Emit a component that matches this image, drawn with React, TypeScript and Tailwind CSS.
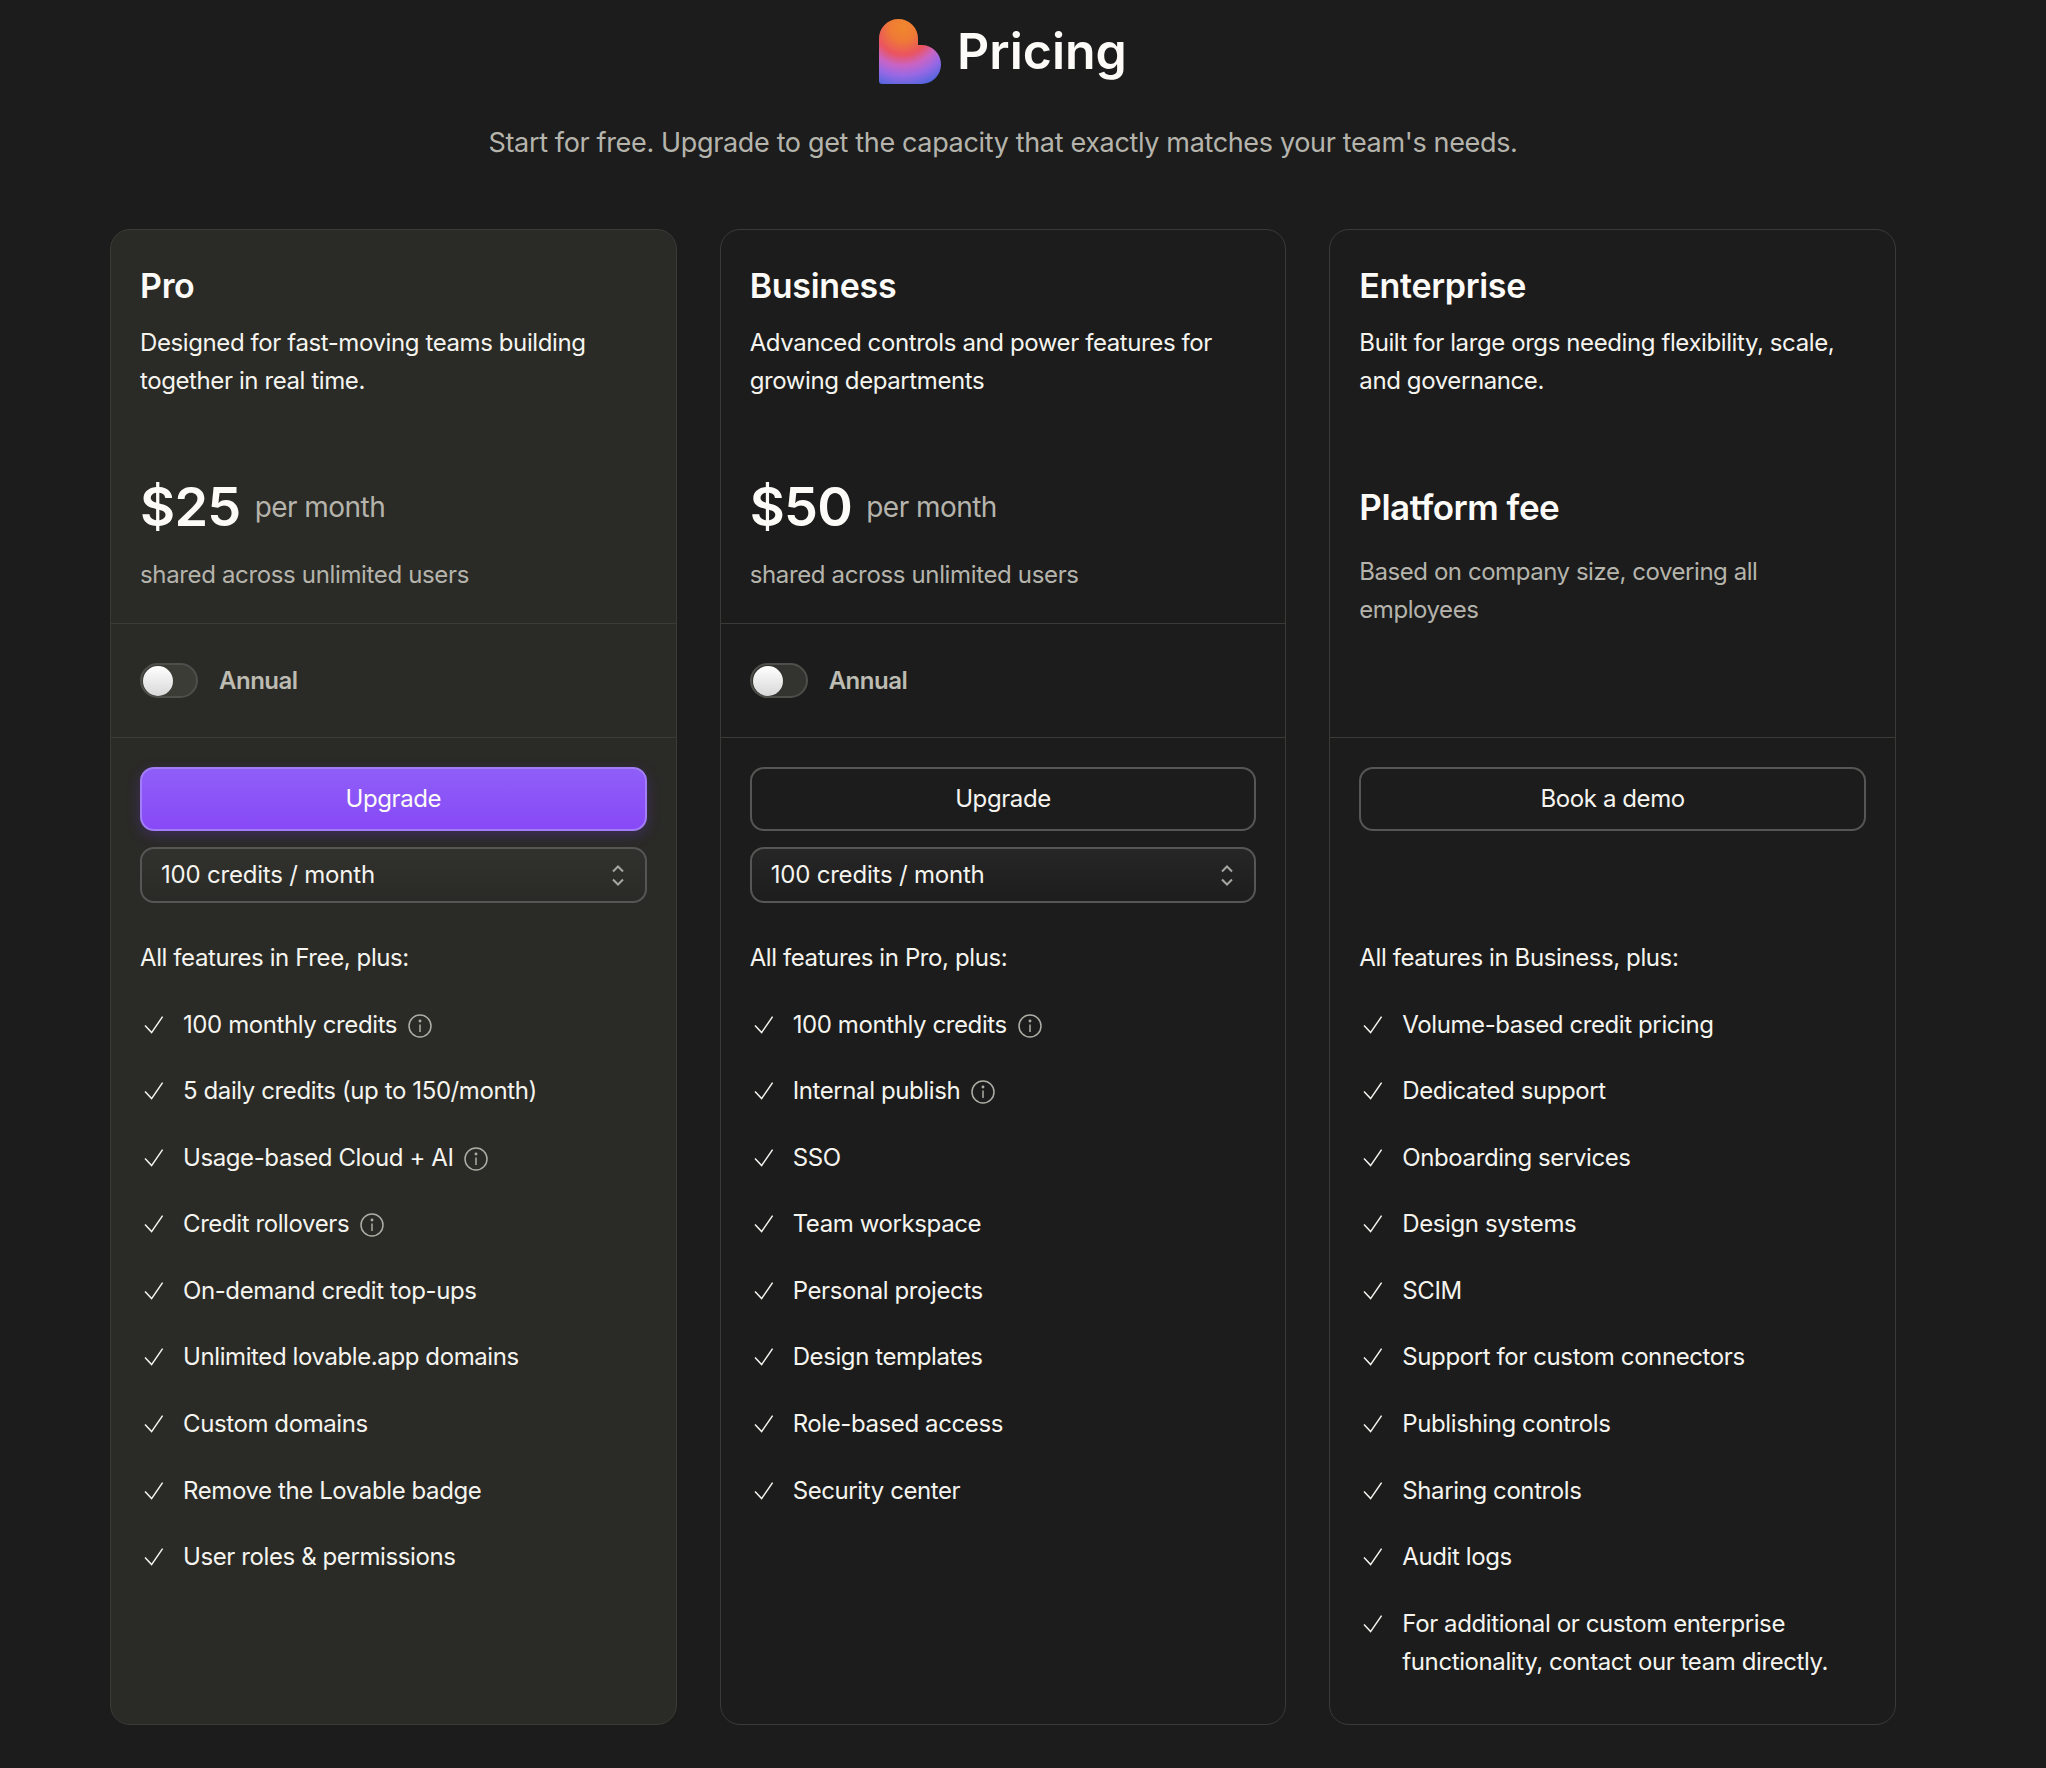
const FONT = "font-['Inter','Liberation_Sans',sans-serif]"

type Feature = { text: string; info?: boolean }

type Plan = {
  name: string
  description: string
  price?: string
  priceNote: string
  cta: string
  highlighted?: boolean
  featuresTitle: string
  features: Feature[]
}

const plans: Plan[] = [
  {
    name: 'Pro',
    description: 'Designed for fast-moving teams building together in real time.',
    price: '$25',
    priceNote: 'shared across unlimited users',
    cta: 'Upgrade',
    highlighted: true,
    featuresTitle: 'All features in Free, plus:',
    features: [
      { text: '100 monthly credits', info: true },
      { text: '5 daily credits (up to 150/month)' },
      { text: 'Usage-based Cloud + AI', info: true },
      { text: 'Credit rollovers', info: true },
      { text: 'On-demand credit top-ups' },
      { text: 'Unlimited lovable.app domains' },
      { text: 'Custom domains' },
      { text: 'Remove the Lovable badge' },
      { text: 'User roles & permissions' },
    ],
  },
  {
    name: 'Business',
    description: 'Advanced controls and power features for growing departments',
    price: '$50',
    priceNote: 'shared across unlimited users',
    cta: 'Upgrade',
    featuresTitle: 'All features in Pro, plus:',
    features: [
      { text: '100 monthly credits', info: true },
      { text: 'Internal publish', info: true },
      { text: 'SSO' },
      { text: 'Team workspace' },
      { text: 'Personal projects' },
      { text: 'Design templates' },
      { text: 'Role-based access' },
      { text: 'Security center' },
    ],
  },
  {
    name: 'Enterprise',
    description: 'Built for large orgs needing flexibility, scale, and governance.',
    priceNote: 'Based on company size, covering all employees',
    cta: 'Book a demo',
    featuresTitle: 'All features in Business, plus:',
    features: [
      { text: 'Volume-based credit pricing' },
      { text: 'Dedicated support' },
      { text: 'Onboarding services' },
      { text: 'Design systems' },
      { text: 'SCIM' },
      { text: 'Support for custom connectors' },
      { text: 'Publishing controls' },
      { text: 'Sharing controls' },
      { text: 'Audit logs' },
      { text: 'For additional or custom enterprise functionality, contact our team directly.' },
    ],
  },
]

function HeartLogo() {
  return (
    <svg width="62" height="65" viewBox="0 0 62 65" className="shrink-0">
      <defs>
        <radialGradient id="heart" gradientUnits="userSpaceOnUse" cx="24" cy="8" r="62">
          <stop offset="0" stopColor="#f0882f" />
          <stop offset="0.22" stopColor="#ef7a35" />
          <stop offset="0.45" stopColor="#ea5460" />
          <stop offset="0.62" stopColor="#c964c4" />
          <stop offset="0.78" stopColor="#9a68e4" />
          <stop offset="1" stopColor="#4d66de" />
        </radialGradient>
      </defs>
      <path
        d="M0 19.5A19.5 19.5 0 0 1 39 19.5V26H42.5A19.5 19.5 0 0 1 42.5 65H3Q0 65 0 62Z"
        fill="url(#heart)"
      />
    </svg>
  )
}

function CheckMark() {
  return (
    <svg width="20" height="18" viewBox="0 0 20 18" fill="none" stroke="#f5f4ef" strokeWidth="1.5" className="ml-[4px] mt-[10px] shrink-0">
      <path d="M1 9.5L7.6 16.6L18.6 0.6" />
    </svg>
  )
}

function InfoIcon() {
  return (
    <svg width="24" height="24" viewBox="0 0 24 24" fill="none" stroke="#aeada5" strokeWidth="1.5" className="shrink-0">
      <circle cx="12" cy="12" r="11" />
      <path d="M12 10.5v7.5" />
      <circle cx="12" cy="7" r="0.7" fill="#aeada5" />
    </svg>
  )
}

function UpDown() {
  return (
    <svg width="12" height="21" viewBox="0 0 12 21" fill="none" stroke="#a6a5a0" strokeWidth="2.1">
      <path d="M1 6.5L6 1.5L11 6.5" />
      <path d="M1 14.5L6 19.5L11 14.5" />
    </svg>
  )
}

function PlanCard({ plan }: { plan: Plan }) {
  return (
    <div
      className={`flex h-[1496px] flex-col rounded-[20px] border border-[#3a3a37] ${
        plan.highlighted ? 'bg-[#2a2a26]' : 'bg-[#1c1c1c]'
      }`}
    >
      {/* Intro */}
      <div className={`flex flex-col border-b border-[#3a3a37] px-[29px] pt-[33px] ${plan.price ? 'h-[394px]' : 'h-[508px]'}`}>
        <h2 className="text-[34px] leading-[46px] font-semibold tracking-[-0.3px] text-[#fcfbf8]">{plan.name}</h2>
        <p className="mt-[15px] text-[24px] leading-[38px] tracking-[-0.4px] text-[#f5f4ef]">{plan.description}</p>
        {plan.price ? (
          <>
            <div className="mt-[69px] flex items-center gap-[14px]">
              <span className="text-[54px] leading-[76px] font-semibold tracking-[-0.7px] text-[#fcfbf8]">{plan.price}</span>
              <span className="text-[28px] tracking-[-0.55px] text-[#b5b4ac]">per month</span>
            </div>
            <p className="mt-[11px] text-[24px] leading-[38px] tracking-[-0.35px] text-[#b5b4ac]">{plan.priceNote}</p>
          </>
        ) : (
          <>
            <h3 className="mt-[84px] text-[35px] leading-[46px] font-semibold tracking-[-0.5px] text-[#fcfbf8]">Platform fee</h3>
            <p className="mt-[23px] text-[24px] leading-[38px] tracking-[-0.45px] text-[#b5b4ac]">{plan.priceNote}</p>
          </>
        )}
      </div>

      {/* Annual toggle */}
      {plan.price && (
        <div className="flex h-[114px] items-center gap-[21px] border-b border-[#3a3a37] px-[29px]">
          <div
            className={`flex h-[35px] w-[58px] items-center rounded-full border-2 border-[#4e4e4b] pl-[1px] ${
              plan.highlighted ? 'bg-[#3c3c37]' : 'bg-[#33332f]'
            }`}
          >
            <div className="size-[30px] rounded-full bg-gradient-to-b from-white to-[#d8d8d8]" />
          </div>
          <span className="text-[24px] font-semibold tracking-[-0.5px] text-[#bdbcb3]">Annual</span>
        </div>
      )}

      {/* Actions and features */}
      <div className="flex flex-col px-[29px] pt-[29px]">
        <button
          className={`h-[64px] rounded-[14px] border-2 text-[24px] tracking-[-0.4px] ${
            plan.highlighted
              ? 'border-[#a27df6] bg-gradient-to-b from-[#8f5ef8] to-[#8749f6] text-[#fcfbf8] shadow-[0_4px_14px_rgba(110,60,220,0.3)]'
              : 'border-[#565654] bg-transparent text-[#f5f4ef]'
          }`}
        >
          {plan.cta}
        </button>
        <div className="mt-[16px] h-[56px]">
          {plan.price && (
            <div
              className={`flex h-full items-center justify-between rounded-[14px] border-2 border-[#565654] bg-gradient-to-b pl-[19px] pr-[21px] text-[24px] tracking-[-0.2px] text-[#f5f4ef] ${
                plan.highlighted ? 'from-[#31312d] to-[#2a2a27]' : 'from-[#262626] to-[#1d1d1d]'
              }`}
            >
              100 credits / month
              <UpDown />
            </div>
          )}
        </div>
        <p className="mt-[36px] text-[24px] leading-[38px] tracking-[-0.4px] text-[#f5f4ef]">{plan.featuresTitle}</p>
        <ul className="mt-[28.5px] flex flex-col gap-[28.6px]">
          {plan.features.map((f) => (
            <li key={f.text} className="flex gap-[19px] text-[24px] leading-[38px] tracking-[-0.4px] text-[#f5f4ef]">
              <CheckMark />
              <span>
                {f.text}
                {f.info && (
                  <span className="ml-[11px] inline-block align-[-5px]">
                    <InfoIcon />
                  </span>
                )}
              </span>
            </li>
          ))}
        </ul>
      </div>
    </div>
  )
}

export default function App() {
  return (
    <div className={`${FONT} min-h-[1768px] bg-[#1c1c1c] pl-[110px] pr-[150px] antialiased`}>
      <div className="flex flex-col items-center pt-[19px]">
        <div className="flex items-center gap-[16px]">
          <HeartLogo />
          <h1 className="text-[50px] leading-[65px] font-semibold text-[#fcfbf8]">Pricing</h1>
        </div>
        <p className="mt-[40px] text-[27px] leading-[38px] tracking-[-0.35px] text-[#b5b4ac]">
          Start for free. Upgrade to get the capacity that exactly matches your team&apos;s needs.
        </p>
      </div>
      <div className="mt-[67px] grid grid-cols-3 gap-[43px]">
        {plans.map((p) => (
          <PlanCard key={p.name} plan={p} />
        ))}
      </div>
    </div>
  )
}
